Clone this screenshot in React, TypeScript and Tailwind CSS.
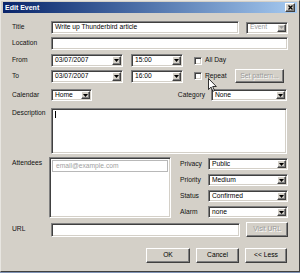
import type { ReactNode } from 'react';

const FONT = { fontFamily: '"Liberation Sans", Arial, sans-serif' };

const sunken =
  'bg-white border border-t-[#808080] border-l-[#808080] border-b-white border-r-white shadow-[inset_1px_1px_0_#404040,inset_-1px_-1px_0_#d4d0c8]';
const raised =
  'bg-[#d4d0c8] border border-t-white border-l-white border-b-[#404040] border-r-[#404040] shadow-[inset_-1px_-1px_0_#808080]';

function Arrow({ disabled }: { disabled?: boolean }) {
  return (
    <div className={`${raised} w-[9px] h-full flex items-center justify-center shrink-0`}>
      <svg width="5" height="3" viewBox="0 0 5 3">
        <path d="M0 0h5L2.5 3z" fill={disabled ? '#9a9a9a' : '#000'} />
      </svg>
    </div>
  );
}

function Select({ value, w, h = 12, disabled }: { value: string; w: string; h?: number; disabled?: boolean }) {
  return (
    <div
      className={`${sunken} ${w} flex items-center shrink-0 ${disabled ? 'bg-[#d4d0c8]' : ''}`}
      style={{ height: h }}
    >
      <span className={`flex-1 pl-[3px] truncate ${disabled ? 'text-[#9a9a9a] [text-shadow:1px_1px_0_#fff]' : 'text-black'}`}>
        {value}
      </span>
      <div className="h-full py-[1px] pr-[1px]">
        <Arrow disabled={disabled} />
      </div>
    </div>
  );
}

function Field({ value, w, h = 13, children }: { value?: string; w: string; h?: number; children?: ReactNode }) {
  return (
    <div className={`${sunken} ${w} flex items-center shrink-0`} style={{ height: h }}>
      {value && <span className="pl-[3px] text-black">{value}</span>}
      {children}
    </div>
  );
}

function Button({ label, w, h = 15, disabled }: { label: string; w: string; h?: number; disabled?: boolean }) {
  return (
    <div className={`${raised} ${w} flex items-center justify-center shrink-0`} style={{ height: h }}>
      <span className={disabled ? 'text-[#9a9a9a] [text-shadow:1px_1px_0_#fff]' : 'text-black'}>{label}</span>
    </div>
  );
}

function Check({ label }: { label: string }) {
  return (
    <div className="flex items-center gap-[3px]">
      <div className={`${sunken} w-[8px] h-[8px]`} />
      <span>{label}</span>
    </div>
  );
}

function Label({ text, w = 'w-[39px]' }: { text: string; w?: string }) {
  return <span className={`${w} shrink-0`}>{text}</span>;
}

export default function App() {
  return (
    <div className="w-[300px] h-[273px] bg-[#7f93b5]" style={FONT}>
      <div className="relative w-[300px] h-[272px] bg-[#d4d0c8] border border-t-[#e8e6e1] border-l-[#e8e6e1] border-b-[#404040] border-r-[#404040] text-[6.7px] leading-none text-[#111] p-[1px] flex flex-col">
        {/* title bar */}
        <div className="h-[11px] mx-[1px] bg-gradient-to-r from-[#0a246a] to-[#a6caf0] flex items-center pl-[2px] pr-[2px]">
          <span className="text-white font-bold text-[7px] flex-1">Edit Event</span>
          <div className={`${raised} w-[10px] h-[9px] flex items-center justify-center`}>
            <svg width="5" height="5" viewBox="0 0 5 5">
              <path d="M0.5 0.5l4 4M4.5 0.5l-4 4" stroke="#000" strokeWidth="1.3" />
            </svg>
          </div>
        </div>

        <div className="flex flex-col pl-[10px] pr-[11px]">
          {/* Title */}
          <div className="flex items-center mt-[8px]">
            <Label text="Title" />
            <Field value="Write up Thunderbird article" w="w-[188px]" />
            <div className="ml-[7px]">
              <Select value="Event" w="w-[42px]" disabled />
            </div>
          </div>

          {/* Location */}
          <div className="flex items-center mt-[3px]">
            <Label text="Location" />
            <Field w="w-[237px]" />
          </div>

          {/* From */}
          <div className="flex items-center mt-[4px]">
            <Label text="From" />
            <Select value="03/07/2007" w="w-[72px]" h={13} />
            <div className="ml-[8px]">
              <Select value="15:00" w="w-[52px]" h={13} />
            </div>
            <div className="ml-[11px]">
              <Check label="All Day" />
            </div>
          </div>

          {/* To */}
          <div className="flex items-center mt-[2px]">
            <Label text="To" />
            <Select value="03/07/2007" w="w-[72px]" h={13} />
            <div className="ml-[8px]">
              <Select value="16:00" w="w-[52px]" h={13} />
            </div>
            <div className="ml-[11px] w-[41px]">
              <Check label="Repeat" />
            </div>
            <Button label="Set pattern..." w="w-[49px]" h={14} disabled />
          </div>

          {/* Calendar / Category */}
          <div className="flex items-center mt-[6px]">
            <Label text="Calendar" />
            <Select value="Home" w="w-[41px]" />
            <span className="ml-auto mr-[6px]">Category</span>
            <Select value="None" w="w-[76px]" />
          </div>

          {/* Description */}
          <div className="flex items-start mt-[7px]">
            <span className="w-[39px] shrink-0 pt-[2px]">Description</span>
            <div className={`${sunken} w-[237px] h-[46px] pl-[3px] pt-[2px]`}>
              <div className="w-px h-[7px] bg-black" />
            </div>
          </div>

          {/* Attendees + options */}
          <div className="flex items-start mt-[3px]">
            <span className="w-[37px] shrink-0 pt-[3px]">Attendees</span>
            <div className={`${sunken} w-[123px] h-[61px] p-[2px]`}>
              <div className="h-[12px] w-[116px] border border-[#b8b8b8] bg-white flex items-center pl-[3px] text-[#a0a0a0]">
                email@example.com
              </div>
            </div>
            <div className="ml-[9px] flex flex-col gap-[4px] pt-[1px]">
              {[
                ['Privacy', 'Public'],
                ['Priority', 'Medium'],
                ['Status', 'Confirmed'],
                ['Alarm', 'none'],
              ].map(([k, v]) => (
                <div key={k} className="flex items-center">
                  <span className="w-[28px]">{k}</span>
                  <Select value={v} w="w-[80px]" />
                </div>
              ))}
            </div>
          </div>

          {/* URL */}
          <div className="flex items-center mt-[4px]">
            <Label text="URL" />
            <Field w="w-[189px]" h={14} />
            <div className="ml-[6px]">
              <Button label="Visit URL" w="w-[42px]" h={15} disabled />
            </div>
          </div>

          {/* buttons */}
          <div className="flex justify-end gap-[6px] mt-[11px]">
            <Button label="OK" w="w-[44px]" h={15} />
            <Button label="Cancel" w="w-[43px]" h={15} />
            <Button label="<< Less" w="w-[42px]" h={15} />
          </div>
        </div>

        {/* mouse cursor */}
        <svg className="absolute left-[207px] top-[77px]" width="9" height="14" viewBox="0 0 9 14">
          <path d="M0.5 0.5v11l2.6-2.4 1.8 4.2 1.6-0.7-1.8-4.1h3.6z" fill="#fff" stroke="#000" strokeWidth="0.8" />
        </svg>
      </div>
    </div>
  );
}
